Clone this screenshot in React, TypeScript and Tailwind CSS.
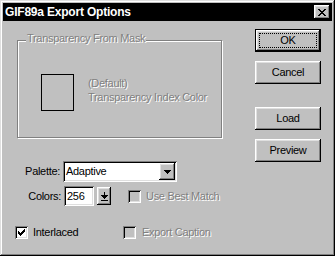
import React from 'react';

const raised =
  'bg-[#c0c0c0] shadow-[inset_-1px_-1px_0_#000,inset_1px_1px_0_#fff,inset_-2px_-2px_0_#808080,inset_2px_2px_0_#dfdfdf]';
const sunken =
  'shadow-[inset_1px_1px_0_#808080,inset_-1px_-1px_0_#fff,inset_2px_2px_0_#000,inset_-2px_-2px_0_#dfdfdf]';
const disabledText = 'text-[#808080] [text-shadow:1px_1px_0_#fff]';

const CloseGlyph = () => (
  <svg width="8" height="7" viewBox="0 0 8 7" shapeRendering="crispEdges">
    <path
      fill="#000"
      d="M0 0h2v1H0zM6 0h2v1H6zM1 1h2v1H1zM5 1h2v1H5zM2 2h4v1H2zM3 3h2v1H3zM2 4h4v1H2zM1 5h2v1H1zM5 5h2v1H5zM0 6h2v1H0zM6 6h2v1H6z"
    />
  </svg>
);

const DownTriangle = () => (
  <svg width="7" height="4" viewBox="0 0 7 4" shapeRendering="crispEdges">
    <path fill="#000" d="M0 0h7v1H0zM1 1h5v1H1zM2 2h3v1H2zM3 3h1v1H3z" />
  </svg>
);

const SpinGlyph = () => (
  <svg width="7" height="9" viewBox="0 0 7 9" shapeRendering="crispEdges">
    <path fill="#000" d="M3 0h1v3H3zM0 3h7v1H0zM1 4h5v1H1zM2 5h3v1H2zM3 6h1v1H3zM0 8h7v1H0z" />
  </svg>
);

const CheckGlyph = () => (
  <svg width="7" height="7" viewBox="0 0 7 7" shapeRendering="crispEdges">
    <path
      fill="#000"
      d="M6 0h1v1H6zM5 1h2v1H5zM0 2h1v1H0zM4 2h3v1H4zM0 3h2v1H0zM3 3h3v1H3zM0 4h5v1H0zM1 5h3v1H1zM2 6h1v1H2z"
    />
  </svg>
);

const Checkbox = ({ checked, disabled }: { checked?: boolean; disabled?: boolean }) => (
  <div
    className={`w-[13px] h-[13px] shrink-0 flex items-start justify-start pl-[3px] pt-[3px] ${sunken} ${
      disabled ? 'bg-[#c0c0c0]' : 'bg-white'
    }`}
  >
    {checked && <CheckGlyph />}
  </div>
);

const Button = ({ label }: { label: string }) => (
  <button className={`w-[66px] h-[23px] ${raised} flex items-center justify-center leading-[13px]`}>
    {label}
  </button>
);

export default function App() {
  return (
    <div className="w-[335px] h-[256px] bg-[#c0c0c0] p-[3px] flex flex-col text-[11px] tracking-[-0.3px] text-black font-['Liberation_Sans',Arial,sans-serif] shadow-[inset_-1px_-1px_0_#000,inset_1px_1px_0_#dfdfdf,inset_-2px_-2px_0_#808080,inset_2px_2px_0_#fff]">
      {/* Title bar */}
      <div className="h-[18px] bg-black flex items-center px-[2px] shrink-0">
        <span className="text-white font-bold text-[12px] tracking-[-0.2px] leading-[14px]">
          GIF89a Export Options
        </span>
        <button className={`ml-auto w-[16px] h-[14px] ${raised} flex items-center justify-center`}>
          <CloseGlyph />
        </button>
      </div>

      <div className="flex flex-1">
        {/* Left column */}
        <div className="flex flex-col pl-[14px]">
          <div className="relative mt-[19px] w-[205px] h-[98px] border border-[#808080] shadow-[inset_1px_1px_0_#fff,1px_1px_0_#fff]">
            <span className={`absolute left-[8px] top-[-9px] px-[1px] bg-[#c0c0c0] leading-[13px] ${disabledText}`}>
              Transparency From Mask
            </span>
            <div className="flex items-start">
              <div className="ml-[23px] mt-[33px] w-[33px] h-[37px] border border-black" />
              <div className={`ml-[14px] mt-[35px] flex flex-col leading-[14px] ${disabledText}`}>
                <span>(Default)</span>
                <span>Transparency Index Color</span>
              </div>
            </div>
          </div>

          {/* Palette */}
          <div className="flex items-center mt-[23px]">
            <span className="w-[46px] text-right pr-[3px]">Palette:</span>
            <div className={`w-[114px] h-[21px] bg-white ${sunken} flex items-center p-[2px]`}>
              <span className="pl-[1px] leading-[13px]">Adaptive</span>
              <div className={`ml-auto w-[16px] h-[17px] ${raised} flex items-center justify-center`}>
                <DownTriangle />
              </div>
            </div>
          </div>

          {/* Colors */}
          <div className="flex items-center mt-[4px]">
            <span className="w-[47px] text-right pr-[3px]">Colors:</span>
            <div className={`w-[30px] h-[20px] bg-white ${sunken} flex items-center px-[3px] leading-[13px]`}>
              256
            </div>
            <div className={`ml-[3px] w-[14px] h-[18px] ${raised} flex items-center justify-center`}>
              <SpinGlyph />
            </div>
            <div className="ml-[17px] flex items-center">
              <Checkbox disabled />
              <span className={`ml-[5px] leading-[13px] ${disabledText}`}>Use Best Match</span>
            </div>
          </div>

          {/* Checkboxes */}
          <div className="flex items-center mt-[20px] -ml-[2px]">
            <div className="w-[108px] flex items-center">
              <Checkbox checked />
              <span className="ml-[5px] leading-[13px]">Interlaced</span>
            </div>
            <Checkbox disabled />
            <span className={`ml-[6px] leading-[13px] ${disabledText}`}>Export Caption</span>
          </div>
        </div>

        {/* Right column */}
        <div className="ml-auto pr-[11px] pt-[8px] flex flex-col">
          <div className="relative w-[66px] h-[23px] border border-black">
            <button className={`w-full h-full ${raised} shadow-[inset_-1px_-1px_0_#000,inset_1px_1px_0_#fff,inset_-2px_-2px_0_#808080,inset_2px_2px_0_#dfdfdf] flex items-center justify-center leading-[13px]`}>
              OK
            </button>
            <div className="absolute inset-[3px] border border-dotted border-black pointer-events-none" />
          </div>
          <div className="mt-[9px]">
            <Button label="Cancel" />
          </div>
          <div className="mt-[23px]">
            <Button label="Load" />
          </div>
          <div className="mt-[9px]">
            <Button label="Preview" />
          </div>
        </div>
      </div>
    </div>
  );
}
